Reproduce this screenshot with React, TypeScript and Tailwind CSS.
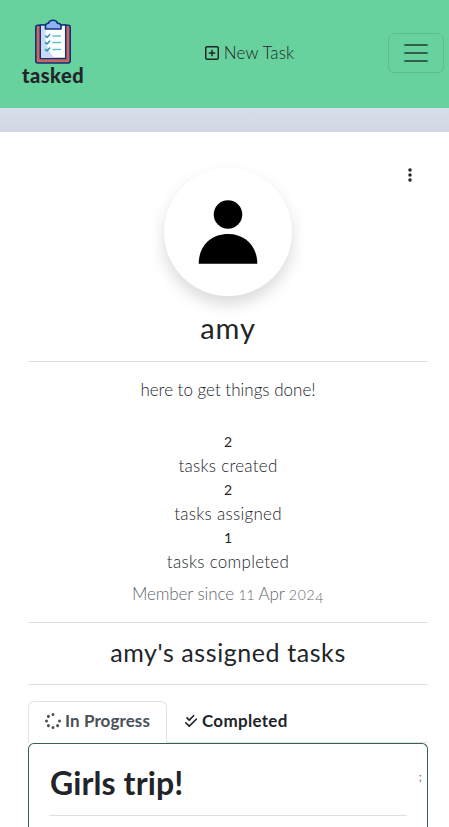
import type { ReactNode } from "react";
import {
  FaRegSquarePlus,
  FaEllipsisVertical,
  FaSpinner,
  FaCheckDouble,
} from "react-icons/fa6";

function Logo() {
  return (
    <a className="-mt-[3px] flex w-[66px] flex-col items-center" href="#">
      <svg width="38" height="46" viewBox="0 0 38 46" className="block">
        <rect x="1.8" y="6.2" width="34.400" height="37.8" rx="2" fill="#cb6660" stroke="#0c3477" strokeWidth="1.600" />
        <path d="M6.300 6h25.400v33.500H6.300z" fill="#fff" stroke="#0c3477" strokeWidth="1.500" />
        <path d="M7 7h6C10 15 10.500 29 20.500 38.700H7z" fill="#cbd9fb" />
        <path d="M11.500 10V6.500c0-2 2-2.200 3-2.300C15.500.3 22.500.3 23.500 4.200c1 .1 3.500.3 3.500 2.300V10z" fill="#91aff3" stroke="#0c3477" strokeWidth="1.600" strokeLinejoin="round" />
        <g fill="none" strokeWidth="1.500" strokeLinecap="round" strokeLinejoin="round">
          <path d="M11.500 17l1.500 1.500 2.700-3M11.500 23.500l1.500 1.500 2.700-3M11.500 30.500l1.500 1.500 2.700-3" stroke="#2497aa" />
          <path d="M19 17h7.500M19 23.500h7.500M19 30.500h7.500" stroke="#5cc4c8" />
        </g>
      </svg>
      <span className="-mt-px whitespace-nowrap font-['Lato',sans-serif] text-[20px] leading-[22px] font-black tracking-[0.5px] text-[#212529]">
        tasked
      </span>
    </a>
  );
}

function Line({ children, className = "" }: { children: ReactNode; className?: string }) {
  return (
    <p className={`h-6 whitespace-nowrap text-[17px] leading-6 ${className}`}>{children}</p>
  );
}

function Count({ value }: { value: number }) {
  return <p className="h-6 text-[14px] leading-6 font-normal">{value}</p>;
}

function Rule() {
  return <hr className="h-px border-0 bg-[#dee0e1]" />;
}

export default function App() {
  return (
    <div className="h-[827px] overflow-hidden bg-[#d6dce8] font-['Lato',sans-serif] text-base font-light text-[#212529]">
      <nav className="flex h-[108px] items-center justify-between bg-[#68d29f] pr-[5px] pl-5">
        <Logo />
        <a href="#" className="-mt-[3px] ml-6 flex items-center gap-1 leading-6">
          <FaRegSquarePlus size={16} />
          <span className="text-[17px] tracking-[0.1px]">New Task</span>
        </a>
        <button className="-mt-0.5 flex h-10 w-14 flex-col items-center justify-center gap-[6px] rounded-md border border-[#5dbd8f]" aria-label="Menu">
          <span className="h-0.5 w-6 rounded-full bg-[#345f4c]" />
          <span className="h-0.5 w-6 rounded-full bg-[#345f4c]" />
          <span className="h-0.5 w-6 rounded-full bg-[#345f4c]" />
        </button>
      </nav>
      <div className="h-6 bg-linear-to-b from-[#d7deeb] to-[#d2d8e3]" />
      <main className="h-[695px] bg-white pr-[21px] pl-7">
        <div className="grid h-[164px] grid-cols-[1fr_128px_1fr] pt-9">
          <span />
          <div className="flex size-32 items-center justify-center rounded-full bg-white shadow-[0_8px_16px_rgba(0,0,0,0.15)]">
            <svg width="60" height="64" viewBox="0 0 60 64" aria-label="Profile">
              <circle cx="30" cy="14.500" r="14.300" />
              <path d="M.7 63.700C.7 46.500 12.500 34 30 34s29.300 12.500 29.300 29.700z" />
            </svg>
          </div>
          <FaEllipsisVertical className="mr-[10px] -mt-px justify-self-end" size={16} />
        </div>
        <section className="text-center">
          <h1 className="mt-4 h-[34px] text-[29px] leading-[31px] font-normal tracking-[0.9px]">amy</h1>
          <div className="mt-[15px]"><Rule /></div>
          <Line className="mt-4">here to get things done!</Line>
          <div className="mt-7">
            <Count value={2} />
            <Line className="tracking-[0.25px]">tasks created</Line>
            <Count value={2} />
            <Line className="tracking-[0.27px]">tasks assigned</Line>
            <Count value={1} />
            <Line className="tracking-[0.27px]">tasks completed</Line>
          </div>
          <Line className="mt-2 tracking-[-0.1px] text-[#62676b]">
            Member since <span className="text-[14px]">11</span> Apr{" "}
            <span className="text-[14px] tracking-[0.7px]">
              202<span className="inline-block translate-y-[3px]">4</span>
            </span>
          </Line>
          <div className="mt-4"><Rule /></div>
          <h2 className="my-4 h-[29px] text-[25px] leading-[26px] font-normal tracking-[0.58px]">amy's assigned tasks</h2>
          <Rule />
        </section>
        <div className="mt-4 flex h-[42px] border-b border-[#dee2e6] text-[17px] leading-6 font-bold">
          <button className="-mb-px flex w-[139px] items-center gap-1 rounded-t-md border border-b-0 border-[#dee2e6] bg-white pl-4 text-[#495057]">
            <FaSpinner size={16} className="-mt-[3px]" />
            <span className="-mt-[3px] whitespace-nowrap tracking-[0.1px]">In Progress</span>
          </button>
          <button className="flex items-center gap-1 pl-[17px]">
            <FaCheckDouble size={14} className="-mt-0.5" />
            <span className="-mt-px whitespace-nowrap tracking-[0.3px]">Completed</span>
          </button>
        </div>
        <article className="h-[100px] rounded-t-md border border-b-0 border-[#38614f] bg-white px-5 pt-5">
          <div className="flex h-[38px] items-center justify-between">
            <h3 className="whitespace-nowrap pl-px text-[32px] leading-[38px] font-bold tracking-[0.1px]">Girls trip!</h3>
            <span className="-mt-3 -mr-[15px] text-[12px] font-normal text-[#62676b]">;</span>
          </div>
          <div className="mt-[13px]"><Rule /></div>
        </article>
      </main>
    </div>
  );
}
